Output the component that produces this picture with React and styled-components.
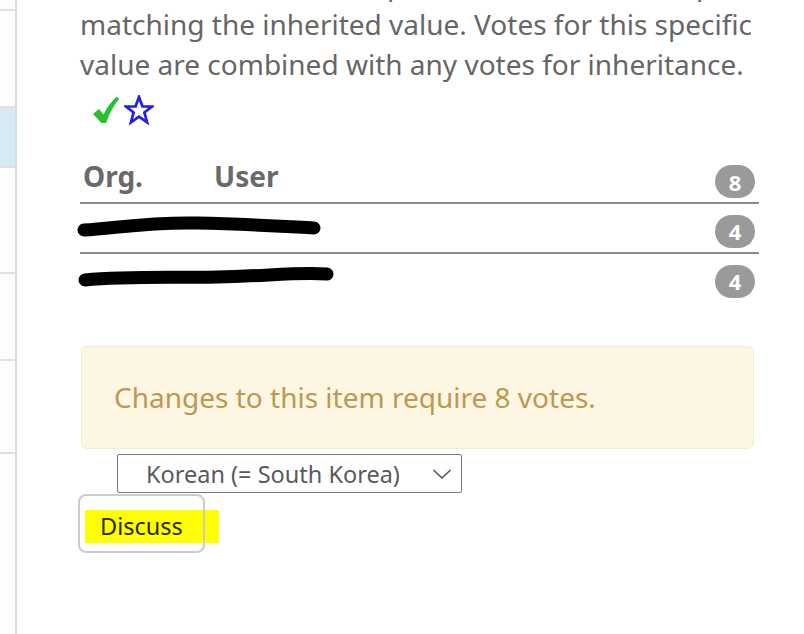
import React from "react";
import styled, { createGlobalStyle } from "styled-components";

const Global = createGlobalStyle`
  html, body { margin: 0; padding: 0; background: #fff; }
  body { font-family: "Noto Sans", "Open Sans", sans-serif; overflow: hidden; }
`;

const Page = styled.div`
  display: flex;
  width: 804px;
  height: 634px;
  overflow: hidden;
`;

const Strip = styled.div`
  width: 15px;
  flex: none;
  border-right: 2px solid #dcdcdc;
  display: flex;
  flex-direction: column;
  background: #fdfdfd;
`;

const StripRow = styled.div`
  height: ${(p) => p.$h}px;
  flex: none;
  border-bottom: 2px solid #e0e0e0;
  background: ${(p) => (p.$active ? "#d6eaf3" : "transparent")};
`;

const Main = styled.div`
  flex: none;
  padding-left: 63px;
  width: 679px;
  overflow: hidden;
`;

const Info = styled.p`
  margin: -36px 0 0;
  font-size: 28px;
  line-height: 40px;
  color: #666;
  white-space: nowrap;
`;

const Icons = styled.div`
  display: flex;
  align-items: center;
  gap: 5px;
  height: 30px;
  margin: 11px 0 0 13px;
`;

const Table = styled.div`
  margin-top: 30px;
  display: flex;
  flex-direction: column;
`;

const Row = styled.div`
  display: flex;
  align-items: center;
  height: ${(p) => (p.$head ? 47 : 48)}px;
  border-bottom: ${(p) => (p.$last ? "none" : "2px solid #8a8a8a")};
  padding: 0 4px 0 3px;
`;

const HeadCell = styled.div`
  font-weight: 700;
  font-size: 28px;
  line-height: 38px;
  color: #6a6a6a;
  width: ${(p) => p.$w}px;
  margin-top: -6px;
`;

const Redact = styled.svg`
  flex: none;
  margin-left: -6px;
`;

const Spacer = styled.div`
  flex: 1;
`;

const Badge = styled.span`
  flex: none;
  display: inline-flex;
  align-items: center;
  justify-content: center;
  width: 40px;
  height: 33px;
  margin-top: 6px;
  border-radius: 17px;
  background: #9a9a9a;
  color: #fff;
  font-weight: 700;
  font-size: 22px;
  font-family: "Open Sans", "Noto Sans", sans-serif;
`;

const Alert = styled.div`
  margin: 44px 5px 0 1px;
  padding: 32px 32px;
  background: #fcf6e3;
  border: 1px solid #f8ead0;
  border-radius: 6px;
  font-size: 28px;
  line-height: 37px;
  color: #c0974f;
`;

const Select = styled.div`
  margin: 5px 0 0 37px;
  width: 345px;
  height: 39px;
  box-sizing: border-box;
  border: 1px solid #7a7a7a;
  border-radius: 2px;
  display: flex;
  align-items: center;
  padding: 0 9px 0 28px;
  font-size: 23.5px;
  color: #5a5a5a;
`;

const SelectText = styled.span`
  flex: 1;
`;

const Button = styled.div`
  margin-top: 3px;
  width: 123px;
  height: 55px;
  box-sizing: border-box;
  padding: 14px 0 0 5px;
  border-radius: 6px;
  outline: 2px solid #cccccc;
  background: transparent;
`;

const Highlight = styled.span`
  display: inline-block;
  box-sizing: border-box;
  width: 134px;
  height: 33px;
  line-height: 32px;
  padding-left: 15px;
  background: #ffff00;
  font-size: 23.5px;
  color: #2a2a00;
  white-space: nowrap;
`;

const strip = [
  { h: 9 },
  { h: 95 },
  { h: 58, active: true },
  { h: 104 },
  { h: 85 },
  { h: 91 },
  { h: 200, last: true },
];

export default function App() {
  return (
    <>
      <Global />
      <Page>
        <Strip>
          {strip.map((r, i) => (
            <StripRow key={i} $h={r.h} $active={r.active} />
          ))}
        </Strip>
        <Main>
          <Info>
            Votes for inheritance equal the votes for the explicit value
            <br />
            matching the inherited value. Votes for this specific
            <br />
            value are combined with any votes for inheritance.
          </Info>
          <Icons>
            <svg width="26" height="28" viewBox="0 0 26 28">
              <path
                d="M0 18 L6 13 L10.5 18.5 C14 11 18.5 5 24 0.5 L26 3 C21 9 16.5 17 13 27 L8.5 27 Z"
                fill="#25c22c"
              />
            </svg>
            <svg width="30" height="30" viewBox="0 0 30 30">
              <path
                d="M15 2 L18.4 11.3 L28 11.5 L20.4 17.4 L23.1 27.4 L15 21.7 L6.9 27.4 L9.6 17.4 L2 11.5 L11.6 11.3 Z"
                fill="none"
                stroke="#2020e8"
                strokeWidth="2.7"
                strokeLinejoin="miter"
              />
            </svg>
          </Icons>
          <Table>
            <Row $head>
              <HeadCell $w={131}>Org.</HeadCell>
              <HeadCell $w={100}>User</HeadCell>
              <Spacer />
              <Badge>8</Badge>
            </Row>
            <Row>
              <Redact width="250" height="24" viewBox="0 0 250 24">
                <path
                  d="M7 14 C40 12 70 6 120 7 C170 8 200 10 237 12"
                  stroke="#000"
                  strokeWidth="13"
                  strokeLinecap="round"
                  fill="none"
                />
              </Redact>
              <Spacer />
              <Badge>4</Badge>
            </Row>
            <Row $last>
              <Redact width="262" height="24" viewBox="0 0 262 24">
                <path
                  d="M8 14 C50 10 90 12 140 11 C190 10 220 6 250 8"
                  stroke="#000"
                  strokeWidth="13"
                  strokeLinecap="round"
                  fill="none"
                />
              </Redact>
              <Spacer />
              <Badge>4</Badge>
            </Row>
          </Table>
          <Alert>Changes to this item require 8 votes.</Alert>
          <Select>
            <SelectText>Korean (= South Korea)</SelectText>
            <svg width="20" height="12" viewBox="0 0 20 12">
              <path d="M1.5 2 L10 10 L18.5 2" fill="none" stroke="#555" strokeWidth="1.6" />
            </svg>
          </Select>
          <Button>
            <Highlight>Discuss</Highlight>
          </Button>
        </Main>
      </Page>
    </>
  );
}
